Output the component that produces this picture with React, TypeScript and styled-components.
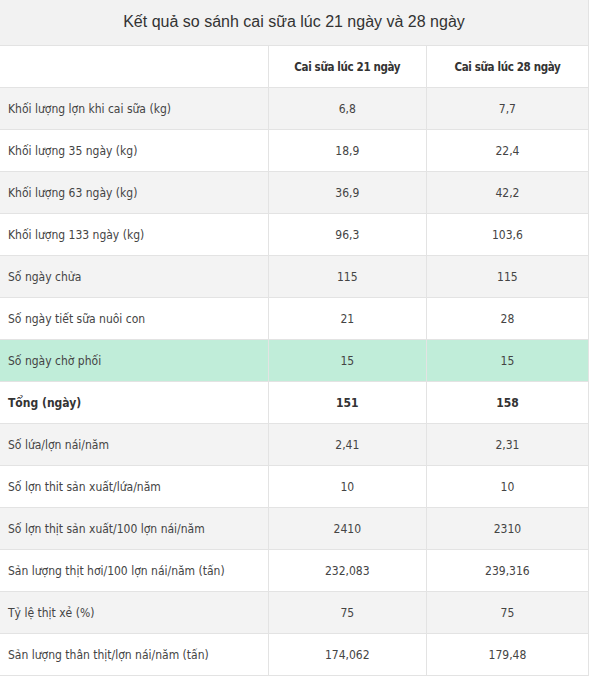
import React from "react";
import styled, { createGlobalStyle } from "styled-components";

const GlobalStyle = createGlobalStyle`
  html, body {
    margin: 0;
    padding: 0;
    background: #ffffff;
  }
`;

const Table = styled.table`
  width: 589px;
  border-collapse: collapse;
  font-family: "DejaVu Sans Condensed", Tahoma, "DejaVu Sans", sans-serif;
  font-size: 12px;
  color: #444444;
  border-right: 1px solid #e3e3e3;
`;

const Caption = styled.th`
  height: 44px;
  padding: 0 0 1px;
  background: #f2f2f2;
  font-family: "Liberation Sans", Arial, sans-serif;
  font-weight: normal;
  font-size: 16px;
  color: #333333;
  text-align: center;
  border-bottom: 1px solid #e3e3e3;
`;

const Row = styled.tr<{ $tone: "white" | "gray" | "green" }>`
  background: ${(p) =>
    p.$tone === "green" ? "#c0edd9" : p.$tone === "gray" ? "#f3f3f3" : "#ffffff"};
`;

const HeadCell = styled.th`
  height: 41px;
  padding: 0 8px;
  font-weight: bold;
  font-size: 11.5px;
  letter-spacing: -0.35px;
  color: #333333;
  text-align: center;
  border-bottom: 1px solid #e3e3e3;
  border-left: 1px solid #e3e3e3;
  &:first-child {
    border-left: none;
  }
`;

const Cell = styled.td<{ $bold?: boolean }>`
  height: 41px;
  padding: 0 8px;
  text-align: center;
  font-weight: ${(p) => (p.$bold ? "bold" : "normal")};
  color: ${(p) => (p.$bold ? "#333333" : "#444444")};
  border-bottom: 1px solid #e3e3e3;
  border-left: 1px solid #e3e3e3;
  &:first-child {
    text-align: left;
    border-left: none;
  }
`;

type Item = { label: string; a: string; b: string; bold?: boolean; green?: boolean };

const rows: Item[] = [
  { label: "Khối lượng lợn khi cai sữa (kg)", a: "6,8", b: "7,7" },
  { label: "Khối lượng 35 ngày (kg)", a: "18,9", b: "22,4" },
  { label: "Khối lượng 63 ngày (kg)", a: "36,9", b: "42,2" },
  { label: "Khối lượng 133 ngày (kg)", a: "96,3", b: "103,6" },
  { label: "Số ngày chửa", a: "115", b: "115" },
  { label: "Số ngày tiết sữa nuôi con", a: "21", b: "28" },
  { label: "Số ngày chờ phối", a: "15", b: "15", green: true },
  { label: "Tổng (ngày)", a: "151", b: "158", bold: true },
  { label: "Số lứa/lợn nái/năm", a: "2,41", b: "2,31" },
  { label: "Số lợn thit sản xuất/lứa/năm", a: "10", b: "10" },
  { label: "Số lợn thịt sản xuất/100 lợn nái/năm", a: "2410", b: "2310" },
  { label: "Sản lượng thịt hơi/100 lợn nái/năm (tấn)", a: "232,083", b: "239,316" },
  { label: "Tỷ lệ thịt xẻ (%)", a: "75", b: "75" },
  { label: "Sản lượng thân thịt/lợn nái/năm (tấn)", a: "174,062", b: "179,48" },
];

export default function App() {
  return (
    <>
      <GlobalStyle />
      <Table>
        <colgroup>
          <col style={{ width: 268 }} />
          <col style={{ width: 158 }} />
          <col style={{ width: 162 }} />
        </colgroup>
        <thead>
          <tr>
            <Caption colSpan={3}>Kết quả so sánh cai sữa lúc 21 ngày và 28 ngày</Caption>
          </tr>
          <Row $tone="white">
            <HeadCell />
            <HeadCell>Cai sữa lúc 21 ngày</HeadCell>
            <HeadCell>Cai sữa lúc 28 ngày</HeadCell>
          </Row>
        </thead>
        <tbody>
          {rows.map((r, i) => (
            <Row key={r.label} $tone={r.green ? "green" : i % 2 === 0 ? "gray" : "white"}>
              <Cell $bold={r.bold}>{r.label}</Cell>
              <Cell $bold={r.bold}>{r.a}</Cell>
              <Cell $bold={r.bold}>{r.b}</Cell>
            </Row>
          ))}
        </tbody>
      </Table>
    </>
  );
}
